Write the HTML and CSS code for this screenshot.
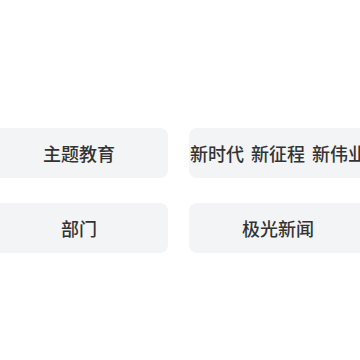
FILE: index.html
```html
<!DOCTYPE html>
<html lang="zh">
<head>
<meta charset="utf-8">
<link rel="stylesheet" href="styles.css">
</head>
<body>
<div class="page">
  <div class="grid">
    <div class="tile"><span>主题教育</span></div>
    <div class="tile"><span class="wide">新时代 新征程 新伟业</span></div>
    <div class="tile"><span>部门</span></div>
    <div class="tile"><span>极光新闻</span></div>
  </div>
</div>
</body>
</html>
```
FILE: styles.css
```css
html, body {
  margin: 0;
  padding: 0;
  background: #ffffff;
  overflow: hidden;
}
.page {
  width: 360px;
  height: 360px;
  overflow: hidden;
  padding-top: 128px;
  box-sizing: border-box;
}
.grid {
  display: grid;
  grid-template-columns: 178px 178px;
  grid-auto-rows: 50px;
  column-gap: 21px;
  row-gap: 25px;
  margin-left: -10px;
  width: 377px;
}
.tile {
  background: #f3f4f6;
  border-radius: 8px;
  display: flex;
  align-items: center;
  justify-content: center;
  white-space: nowrap;
}
.tile span {
  font-family: "Noto Sans CJK SC", "Noto Sans", sans-serif;
  font-size: 18px;
  font-weight: 500;
  color: #333333;
}
.tile .wide {
  word-spacing: 3px;
}
```
